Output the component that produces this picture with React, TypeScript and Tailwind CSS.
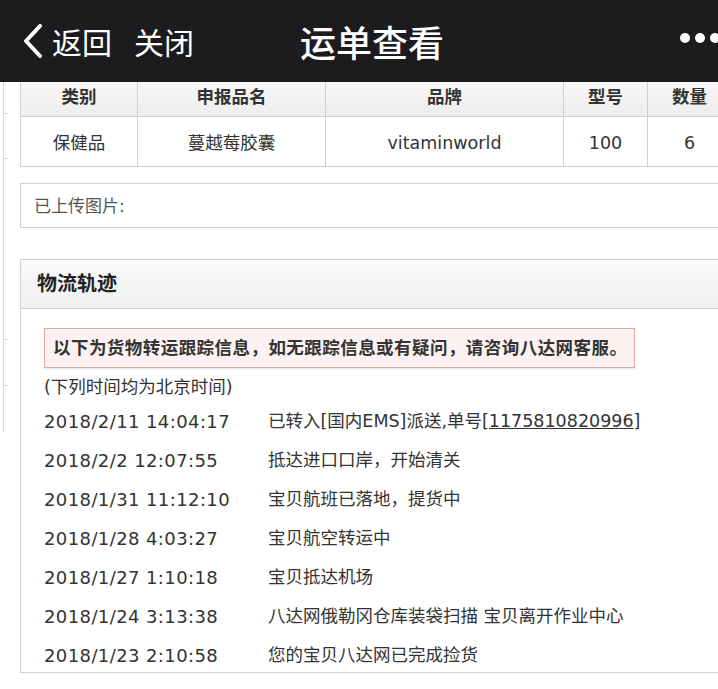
import React from "react";

const font = { fontFamily: '"DejaVu Sans", "Noto Sans CJK SC", sans-serif' };

const rows: [string, React.ReactNode][] = [
  [
    "2018/2/11 14:04:17",
    <>
      已转入[国内EMS]派送,单号[<span className="underline">1175810820996</span>]
    </>,
  ],
  ["2018/2/2 12:07:55", "抵达进口口岸，开始清关"],
  ["2018/1/31 11:12:10", "宝贝航班已落地，提货中"],
  ["2018/1/28 4:03:27", "宝贝航空转运中"],
  ["2018/1/27 1:10:18", "宝贝抵达机场"],
  ["2018/1/24 3:13:38", "八达网俄勒冈仓库装袋扫描 宝贝离开作业中心"],
  ["2018/1/23 2:10:58", "您的宝贝八达网已完成捡货"],
];

export default function App() {
  return (
    <div className="w-[718px] h-[689px] overflow-hidden bg-white text-[#333]" style={font}>
      {/* Top bar */}
      <div className="relative h-[82px] bg-[#1c1c1f] text-white flex items-center">
        <div className="flex items-center pl-[22px]" style={{ fontFamily: '"Noto Sans CJK SC", sans-serif' }}>
          <svg width="22" height="34" viewBox="0 0 22 34" className="mr-[8px]">
            <path d="M18 2 L4 17 L18 32" fill="none" stroke="white" strokeWidth="4" strokeLinecap="round" strokeLinejoin="round" />
          </svg>
          <span className="text-[30px] leading-none">返回</span>
          <span className="text-[30px] leading-none ml-[22px]">关闭</span>
        </div>
        <div
          className="absolute left-[300px] top-0 h-[82px] flex items-center text-[36px] leading-none font-medium"
          style={{ fontFamily: '"Noto Sans CJK SC", sans-serif' }}
        >
          运单查看
        </div>
        <div className="absolute left-[680px] top-[33px] flex gap-[5px]">
          <span className="w-[10px] h-[10px] rounded-full bg-white" />
          <span className="w-[10px] h-[10px] rounded-full bg-white" />
          <span className="w-[10px] h-[10px] rounded-full bg-white" />
        </div>
      </div>

      <div className="flex">
        {/* left artifact column */}
        <div className="w-[20px] shrink-0">
          <div className="ml-[3px] w-[6px] h-[350px] border-l border-[#d4d4d4] flex flex-col">
            <div className="mt-[31px] w-[4px] border-t border-[#ddd]" />
            <div className="mt-[44px] w-[4px] border-t border-[#ddd]" />
            <div className="mt-[180px] w-[4px] border-t border-[#ddd]" />
            <div className="mt-[45px] w-[4px] border-t border-[#ddd]" />
          </div>
        </div>

        <div className="w-[720px] shrink-0">
          {/* Table */}
          <div className="border-l border-b border-[#cfcfcf] text-[17.5px]">
            <div className="flex h-[35px] bg-gradient-to-b from-[#f7f7f7] to-[#ededed] font-bold text-[#333] border-b border-[#cfcfcf]">
              <div className="w-[117px] flex items-center justify-center border-r border-[#cfcfcf] pb-[4px]">类别</div>
              <div className="w-[188px] flex items-center justify-center border-r border-[#cfcfcf] pb-[4px]">申报品名</div>
              <div className="w-[238px] flex items-center justify-center border-r border-[#cfcfcf] pb-[4px]">品牌</div>
              <div className="w-[84px] flex items-center justify-center border-r border-[#cfcfcf] pb-[4px]">型号</div>
              <div className="w-[83px] flex items-center justify-center pb-[4px]">数量</div>
            </div>
            <div className="flex h-[49px] text-[#333]">
              <div className="w-[117px] flex items-center justify-center border-r border-[#cfcfcf] pt-[3px]">保健品</div>
              <div className="w-[188px] flex items-center justify-center border-r border-[#cfcfcf] pt-[3px]">蔓越莓胶囊</div>
              <div className="w-[238px] flex items-center justify-center border-r border-[#cfcfcf] pt-[3px]">vitaminworld</div>
              <div className="w-[84px] flex items-center justify-center border-r border-[#cfcfcf] pt-[3px]">100</div>
              <div className="w-[83px] flex items-center justify-center pt-[3px]">6</div>
            </div>
          </div>

          {/* uploaded images */}
          <div className="mt-[16px] h-[45px] border border-[#cfcfcf] flex items-center pl-[13px] pt-[2px] text-[17px] text-[#555]">
            已上传图片:
          </div>

          {/* logistics panel */}
          <div className="mt-[31px] h-[414px] border border-[#cfcfcf]">
            <div className="h-[49px] bg-gradient-to-b from-[#fafafa] to-[#f0f0f0] border-b border-[#cfcfcf] flex items-center pl-[16px] text-[20px] font-bold text-[#222]">
              物流轨迹
            </div>
            <div className="pl-[23px] pt-[19px]">
              <div className="w-[591px] h-[40px] border border-[#e3a9a9] bg-[#fdf1f1] flex items-center pl-[8px] text-[17.5px] tracking-[0.45px] font-bold text-[#333] shadow-[0_1px_1px_rgba(0,0,0,0.08)]">
                以下为货物转运跟踪信息，如无跟踪信息或有疑问，请咨询八达网客服。
              </div>
              <div className="h-[34px] pt-[4px] flex items-center text-[17.5px] text-[#333]">(下列时间均为北京时间)</div>
              {rows.map(([t, d], i) => (
                <div key={i} className="h-[39px] flex items-center text-[18px] text-[#333]">
                  <div className="w-[224px] shrink-0 tracking-[0.4px]">{t}</div>
                  <div className="text-[17.5px]">{d}</div>
                </div>
              ))}
            </div>
          </div>
        </div>
      </div>
    </div>
  );
}
